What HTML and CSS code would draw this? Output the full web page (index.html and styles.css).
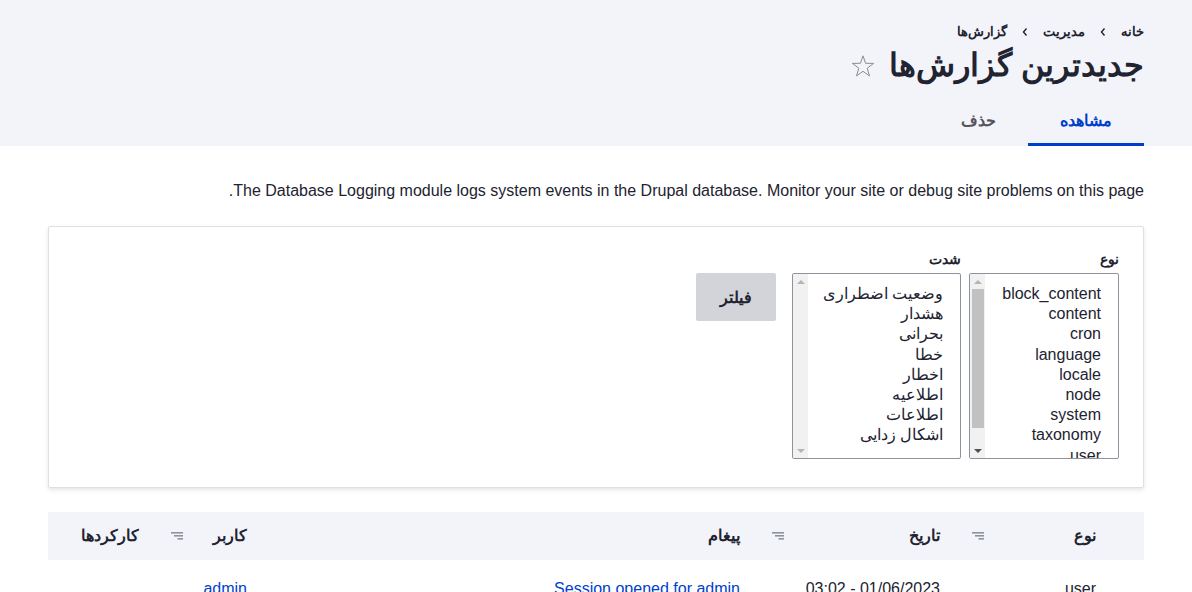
FILE: index.html
```html
<!DOCTYPE html>
<html lang="fa" dir="rtl">
<head>
<meta charset="utf-8">
<title>جدیدترین گزارش‌ها</title>
<link rel="stylesheet" href="styles.css">
</head>
<body>
<header class="page-header">
  <nav class="breadcrumb">
    <a href="#">خانه</a>
    <svg class="sep" width="8" height="10" viewBox="0 0 8 10"><polyline points="5.5,1.5 2.5,5 5.5,8.5" fill="none" stroke="#222330" stroke-width="1.4"/></svg>
    <a href="#">مدیریت</a>
    <svg class="sep" width="8" height="10" viewBox="0 0 8 10"><polyline points="5.5,1.5 2.5,5 5.5,8.5" fill="none" stroke="#222330" stroke-width="1.4"/></svg>
    <a href="#">گزارش‌ها</a>
  </nav>
  <div class="title-row">
    <h1 class="title">جدیدترین گزارش‌ها</h1>
    <svg class="star" width="24" height="24" viewBox="0 0 24 24"><path d="M12 1.8 L14.6 9.3 L22.6 9.4 L16.2 14.2 L18.5 21.9 L12 17.3 L5.5 21.9 L7.8 14.2 L1.4 9.4 L9.4 9.3 Z" fill="none" stroke="#8b8c92" stroke-width="1"/></svg>
  </div>
  <ul class="tabs">
    <li class="tab active"><a href="#">مشاهده</a></li>
    <li class="tab"><a href="#">حذف</a></li>
  </ul>
</header>

<main class="content">
  <p class="desc">The Database Logging module logs system events in the Drupal database. Monitor your site or debug site problems on this page.</p>

  <form class="filter-box">
    <div class="field">
      <label class="label">نوع</label>
      <div class="listbox list-type" role="listbox" aria-multiselectable="true">
        <ul class="opts">
          <li>block_content</li>
          <li>content</li>
          <li>cron</li>
          <li>language</li>
          <li>locale</li>
          <li>node</li>
          <li>system</li>
          <li>taxonomy</li>
          <li>user</li>
        </ul>
        <div class="sb">
          <div class="sb-btn"><span class="arrow-up light"></span></div>
          <div class="sb-track"><div class="sb-thumb"></div></div>
          <div class="sb-btn"><span class="arrow-down dark"></span></div>
        </div>
      </div>
    </div>
    <div class="field">
      <label class="label">شدت</label>
      <div class="listbox list-sev" role="listbox" aria-multiselectable="true">
        <ul class="opts">
          <li>وضعیت اضطراری</li>
          <li>هشدار</li>
          <li>بحرانی</li>
          <li>خطا</li>
          <li>اخطار</li>
          <li>اطلاعیه</li>
          <li>اطلاعات</li>
          <li>اشکال زدایی</li>
        </ul>
        <div class="sb">
          <div class="sb-btn"><span class="arrow-up light"></span></div>
          <div class="sb-track"></div>
          <div class="sb-btn"><span class="arrow-down light"></span></div>
        </div>
      </div>
    </div>
    <div class="actions">
      <button type="button" class="btn">فیلتر</button>
    </div>
  </form>

  <table class="log-table">
    <colgroup>
      <col class="c1"><col class="c2"><col class="c3"><col class="c4"><col class="c5">
    </colgroup>
    <thead>
      <tr>
        <th class="th-first"><a class="sort" href="#"><span>نوع</span><svg class="sort-icon" width="12" height="8" viewBox="0 0 12 8"><rect x="0" y="0" width="12" height="1.6"/><rect x="3" y="3" width="9" height="1.6"/><rect x="6.5" y="6" width="5.5" height="1.6"/></svg></a></th>
        <th><a class="sort" href="#"><span>تاریخ</span><svg class="sort-icon" width="12" height="8" viewBox="0 0 12 8"><rect x="0" y="0" width="12" height="1.6"/><rect x="3" y="3" width="9" height="1.6"/><rect x="6.5" y="6" width="5.5" height="1.6"/></svg></a></th>
        <th>پیغام</th>
        <th><a class="sort" href="#"><span>کاربر</span><svg class="sort-icon" width="12" height="8" viewBox="0 0 12 8"><rect x="0" y="0" width="12" height="1.6"/><rect x="3" y="3" width="9" height="1.6"/><rect x="6.5" y="6" width="5.5" height="1.6"/></svg></a></th>
        <th>کارکردها</th>
      </tr>
    </thead>
    <tbody>
      <tr>
        <td class="td-first">user</td>
        <td>01/06/2023 - 03:02</td>
        <td><a class="link" href="#">Session opened for admin</a></td>
        <td><a class="link" href="#">admin</a></td>
        <td></td>
      </tr>
    </tbody>
  </table>
</main>
</body>
</html>
```
FILE: styles.css
```css
* { box-sizing: border-box; }
html, body { margin: 0; padding: 0; }
body {
  font-family: "Liberation Sans", sans-serif;
  color: #222330;
  background: #fff;
  font-size: 16px;
  line-height: 1.5;
  overflow: hidden;
}
a { color: inherit; text-decoration: none; }

.page-header {
  background: #f3f4f9;
  padding: 22px 48px 0;
}
.breadcrumb {
  display: flex;
  align-items: center;
  gap: 14px;
  font-size: 12.64px;
  font-weight: bold;
  line-height: 20px;
  color: #222330;
}
.sep { display: block; }
.title-row {
  display: flex;
  align-items: center;
  gap: 14px;
  margin-top: 3px;
}
.title {
  margin: 0;
  font-size: 32.4px;
  line-height: 40px;
  font-weight: bold;
  color: #222330;
}
.star { display: block; margin-top: 1px; }

.tabs {
  list-style: none;
  margin: 13px 0 0;
  padding: 0;
  display: flex;
}
.tab a {
  display: block;
  padding: 0 32px;
  height: 48px;
  line-height: 46px;
  font-weight: bold;
  font-size: 16px;
  color: #545560;
  border-bottom: 3px solid transparent;
}
.tab.active a {
  color: #003ecc;
  border-bottom-color: #003ecc;
}

.content {
  padding: 34px 48px 0;
}
.desc {
  margin: 0 0 24px;
  line-height: 22px;
  font-size: 16px;
}

.filter-box {
  border: 1px solid #dedfe4;
  border-radius: 2px;
  box-shadow: 0 2px 4px rgba(0,0,0,0.1);
  padding: 22px 24px 28px;
  display: flex;
  align-items: flex-start;
  gap: 8px;
  background: #fff;
}
.field {
  display: flex;
  flex-direction: column;
}
.label {
  font-size: 14.2px;
  font-weight: bold;
  line-height: 20px;
  margin-bottom: 4px;
}
.listbox {
  height: 186px;
  border: 1px solid #8e929c;
  border-radius: 2px;
  display: flex;
  background: #fff;
  overflow: hidden;
}
.list-type { width: 150px; }
.list-sev { width: 169px; }
.opts {
  flex: 1;
  list-style: none;
  margin: 0;
  padding: 10px 17px 0 0;
  overflow: hidden;
  font-size: 16px;
  line-height: 20.2px;
  color: #222330;
}
.opts li { white-space: nowrap; }
.sb {
  width: 15px;
  flex: none;
  background: #f1f1f1;
  display: flex;
  flex-direction: column;
}
.sb-btn {
  height: 15px;
  flex: none;
  display: flex;
  align-items: center;
  justify-content: center;
}
.sb-track {
  flex: 1;
  min-height: 0;
}
.sb-thumb {
  height: 139px;
  margin: 0 1px 0 2px;
  background: #c1c1c1;
}
.arrow-up, .arrow-down {
  width: 0; height: 0;
  border-left: 4px solid transparent;
  border-right: 4px solid transparent;
}
.arrow-up { border-bottom: 4px solid #a3a3a3; }
.arrow-down { border-top: 4px solid #a3a3a3; }
.arrow-down.dark { border-top-color: #505050; }
.arrow-up.light { border-bottom-color: #b4b4b4; }
.arrow-down.light { border-top-color: #b4b4b4; }

.actions {
  padding-top: 24px;
  margin-right: 8px;
}
.btn {
  width: 80px;
  height: 48px;
  border: 0;
  border-radius: 2px;
  background: #d3d4d9;
  color: #222330;
  font-family: "Liberation Sans", sans-serif;
  font-size: 16px;
  font-weight: bold;
}

.log-table {
  margin-top: 24px;
  width: 100%;
  border-collapse: collapse;
  table-layout: fixed;
}
.c1 { width: 188px; }
.c2 { width: 200px; }
.c4 { width: 108px; }
.c5 { width: 107px; }
.log-table thead tr { background: #f3f4f9; }
.log-table th {
  height: 48px;
  padding: 0 16px;
  text-align: right;
  font-weight: bold;
  font-size: 16px;
}
.log-table th.th-first, .log-table td.td-first { padding-right: 48px; }
.sort {
  display: flex;
  align-items: center;
  justify-content: space-between;
}
.sort-icon { display: block; fill: #8e929c; }
.log-table td {
  padding: 19px 16px;
  text-align: right;
  font-size: 16px;
  line-height: 20px;
  vertical-align: top;
}
.link { color: #003ecc; }
```
